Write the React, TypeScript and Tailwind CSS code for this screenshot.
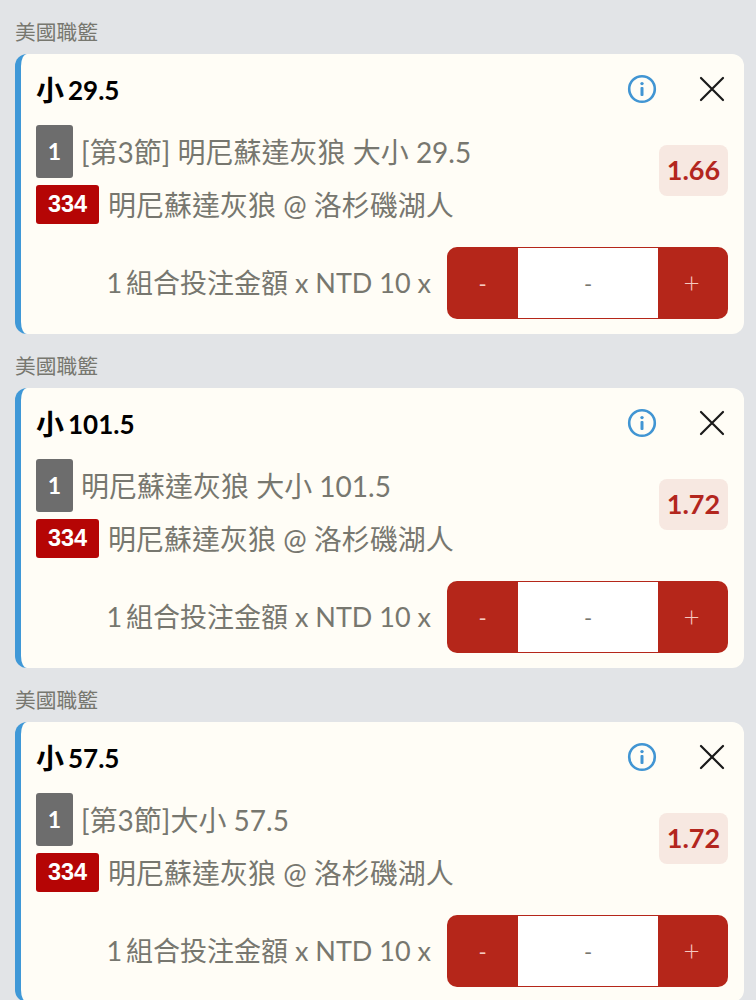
const bets = [
  { title: "29.5", line: "[第3節] 明尼蘇達灰狼 大小 29.5", odds: "1.66" },
  { title: "101.5", line: "明尼蘇達灰狼 大小 101.5", odds: "1.72" },
  { title: "57.5", line: "[第3節]大小 57.5", odds: "1.72" },
];

function InfoIcon() {
  return (
    <svg width="30" height="30" viewBox="0 0 30 30" fill="none">
      <circle cx="15" cy="15" r="12.8" stroke="#4195d3" strokeWidth="2.6" />
      <circle cx="15" cy="9.6" r="1.7" fill="#4195d3" />
      <rect x="13.5" y="13" width="3" height="9" rx="1" fill="#4195d3" />
    </svg>
  );
}

function CloseIcon() {
  return (
    <svg width="26" height="26" viewBox="0 0 26 26" fill="none">
      <path d="M2 2L24 24M24 2L2 24" stroke="#1a1a1a" strokeWidth="2.2" strokeLinecap="round" />
    </svg>
  );
}

function BetCard({ title, line, odds }: { title: string; line: string; odds: string }) {
  return (
    <div className="h-[280px] rounded-[12px] border-l-[6px] border-[#3f98d7] bg-[#fffdf6] pl-[15px] pr-[16px]">
      <div className="flex h-[71px] items-center justify-between">
        <span className="flex items-center font-bold leading-none text-black">
          <span className="mr-[4px] text-[28px]">小</span>
          <span className="text-[26px]">{title}</span>
        </span>
        <div className="mb-[2px] flex items-center">
          <InfoIcon />
          <div className="ml-[42px] mr-[3px]">
            <CloseIcon />
          </div>
        </div>
      </div>
      <div className="flex items-center justify-between">
        <div className="flex flex-col gap-[7px]">
          <div className="flex items-center gap-[8px]">
            <span className="flex h-[53px] w-[37px] items-center justify-center rounded-[3px] bg-[#6d6d6d] text-[23px] font-bold text-white">
              1
            </span>
            <span className="text-[28px] leading-none text-[#77776f]">{line}</span>
          </div>
          <div className="flex items-center gap-[9px]">
            <span className="flex h-[39px] w-[63px] items-center justify-center rounded-[3px] bg-[#b50505] font-['Liberation_Sans',sans-serif] text-[23.5px] font-bold text-white">
              334
            </span>
            <span className="text-[28px] leading-none text-[#77776f]">明尼蘇達灰狼 @ 洛杉磯湖人</span>
          </div>
        </div>
        <span className="mb-[9px] flex h-[51px] w-[69px] items-center justify-center rounded-[8px] bg-[#f7e8e1] text-[27px] font-bold text-[#b3261e]">
          {odds}
        </span>
      </div>
      <div className="mt-[23px] flex items-center justify-end">
        <span className="mb-[2px] mr-[16px] text-[27px] leading-none text-[#77776f]">
          <span className="[word-spacing:-3px]">1 </span>組合投注金額 x NTD 10 x
        </span>
        <div className="flex h-[72px] w-[281px] overflow-hidden rounded-[10px] bg-[#b5261a]">
          <span className="flex w-[71px] items-center justify-center text-[22px] text-[#f5c9c0]">-</span>
          <span className="my-[1px] flex w-[140px] items-center justify-center bg-white text-[22px] text-[#77776f]">-</span>
          <span className="flex w-[70px] items-center justify-center pb-[2px] pr-[3px] text-[28px] font-light text-[#f5c9c0]">+</span>
        </div>
      </div>
    </div>
  );
}

export default function App() {
  return (
    <div className="h-[1000px] overflow-hidden bg-[#e2e4e7] pl-[15px] pr-[12px] font-['Lato','Noto_Sans_CJK_TC',sans-serif]">
      {bets.map((bet) => (
        <section key={bet.title}>
          <div className="flex h-[54px] items-start pt-[19px] text-[20.75px] leading-[26px] text-[#77776f]">美國職籃</div>
          <BetCard {...bet} />
        </section>
      ))}
    </div>
  );
}
